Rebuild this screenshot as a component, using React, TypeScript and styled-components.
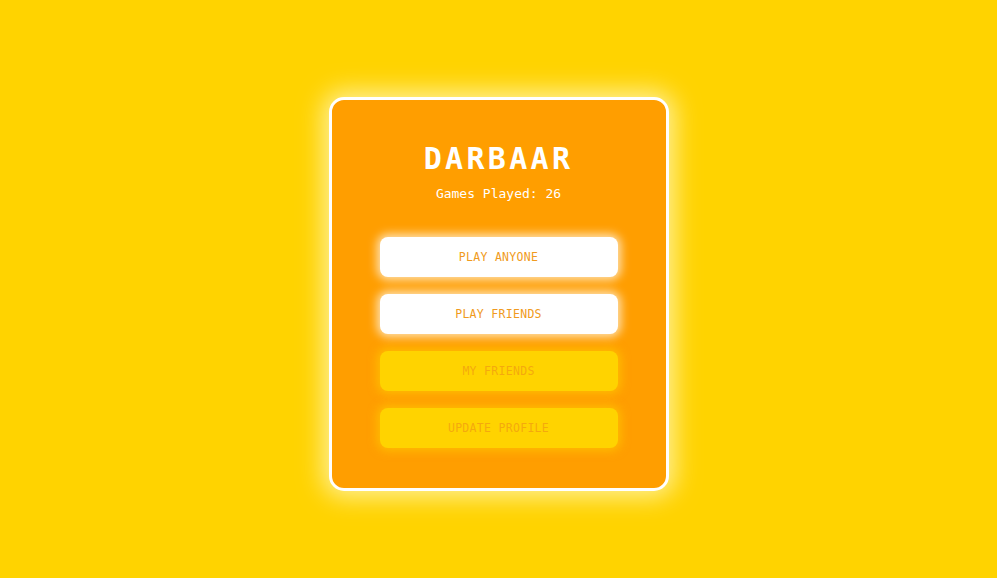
import React from "react";
import styled, { createGlobalStyle } from "styled-components";

const buttons = [
  { label: "PLAY ANYONE", primary: true },
  { label: "PLAY FRIENDS", primary: true },
  { label: "MY FRIENDS", primary: false },
  { label: "UPDATE PROFILE", primary: false },
];

const App = () => {
  return (
    <>
      <GlobalStyle />
      <Page>
        <Card>
          <Title>DARBAAR</Title>
          <Stats>Games Played: 26</Stats>
          <Menu>
            {buttons.map((b) => (
              <MenuButton key={b.label} $primary={b.primary}>
                {b.label}
              </MenuButton>
            ))}
          </Menu>
        </Card>
      </Page>
    </>
  );
};

const GlobalStyle = createGlobalStyle`
  html, body {
    margin: 0;
    padding: 0;
    background: #ffd300;
    font-family: "DejaVu Sans Mono", "Liberation Mono", monospace;
  }
`;

const Page = styled.div`
  min-height: 100vh;
  box-sizing: border-box;
  padding-top: 97px;
  display: flex;
  justify-content: center;
  align-items: flex-start;
`;

const Card = styled.div`
  width: 340px;
  box-sizing: border-box;
  background: #ff9e00;
  border: 3px solid #ffffff;
  border-radius: 15px;
  box-shadow: 0 0 24px 6px rgba(255, 248, 190, 0.8);
  padding: 41px 48px 40px;
  display: flex;
  flex-direction: column;
  align-items: center;
`;

const Title = styled.h1`
  margin: 0;
  color: #ffffff;
  font-size: 30px;
  font-weight: bold;
  letter-spacing: 3.3px;
  line-height: 36px;
`;

const Stats = styled.div`
  margin-top: 8px;
  color: #ffffff;
  font-size: 13px;
  line-height: 18px;
`;

const Menu = styled.div`
  margin-top: 34px;
  width: 100%;
  display: flex;
  flex-direction: column;
  gap: 17px;
`;

const MenuButton = styled.button<{ $primary: boolean }>`
  height: 40px;
  width: 100%;
  border: none;
  border-radius: 8px;
  font-family: "DejaVu Sans Mono", "Liberation Mono", monospace;
  font-size: 11.5px;
  letter-spacing: 0.3px;
  cursor: pointer;
  background: ${(p) => (p.$primary ? "#ffffff" : "#ffd300")};
  color: ${(p) => (p.$primary ? "#f09a20" : "rgba(240, 150, 20, 0.7)")};
  box-shadow: ${(p) =>
    p.$primary
      ? "0 0 10px 3px rgba(255, 255, 255, 0.7)"
      : "0 0 10px 3px rgba(255, 211, 0, 0.55)"};
`;

export default App;
